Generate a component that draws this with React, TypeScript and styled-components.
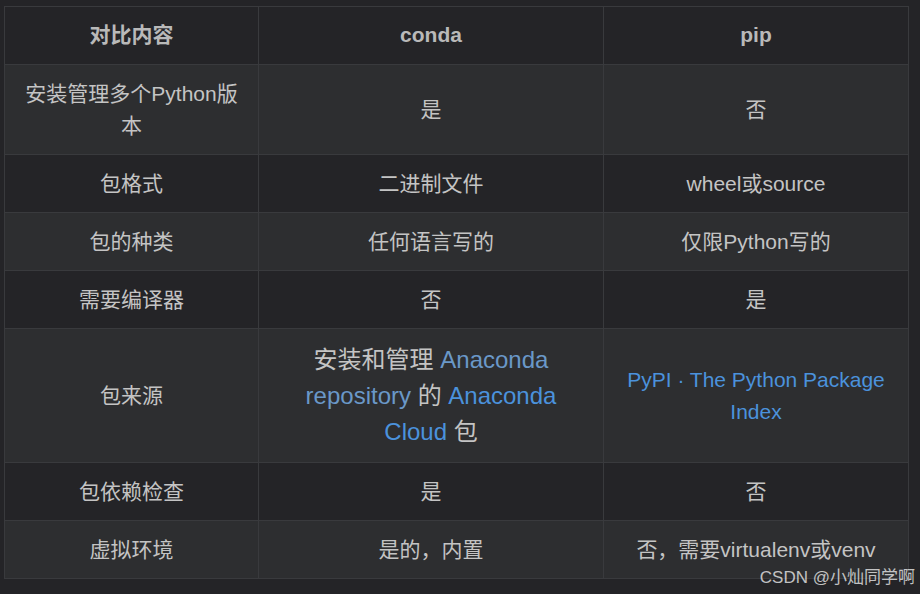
import React from 'react';
import styled, { createGlobalStyle } from 'styled-components';

const GlobalStyle = createGlobalStyle`
  html, body {
    margin: 0;
    padding: 0;
    background: #242427;
  }
`;

const Page = styled.div`
  position: relative;
  width: 920px;
  height: 594px;
  padding: 6px 0 0 4px;
  box-sizing: border-box;
  background: #242427;
  font-family: 'Liberation Sans', 'Noto Sans CJK SC', sans-serif;
`;

const Table = styled.table`
  width: 904px;
  border-collapse: collapse;
  table-layout: fixed;
  color: #c4c4c4;
  font-size: 21px;
  line-height: 32px;
`;

type RowProps = {
  striped?: boolean;
};

const Row = styled.tr<RowProps>`
  background: ${props => (props.striped ? '#2d2e30' : '#242427')};
`;

const HeadCell = styled.th`
  border: 1px solid #393a3d;
  padding: 12px 14px 13px;
  font-weight: bold;
  color: #b9b9b9;
  text-align: center;
`;

const Cell = styled.td`
  border: 1px solid #393a3d;
  padding: 12.5px 14px;
  text-align: center;
  vertical-align: middle;
`;

const BigText = styled.span`
  font-size: 24px;
  line-height: 36px;
`;

type LinkProps = {
  visited?: boolean;
};

const Link = styled.a<LinkProps>`
  color: ${props => (props.visited ? '#6a98c8' : '#4b92dc')};
  text-decoration: none;
`;

const Watermark = styled.div`
  position: absolute;
  right: 5px;
  bottom: 6px;
  font-size: 17px;
  line-height: 20px;
  color: rgba(255, 255, 255, 0.72);
  white-space: nowrap;
`;

const rows: [string, React.ReactNode, React.ReactNode][] = [
  ['安装管理多个Python版本', '是', '否'],
  ['包格式', '二进制文件', 'wheel或source'],
  ['包的种类', '任何语言写的', '仅限Python写的'],
  ['需要编译器', '否', '是'],
  [
    '包来源',
    <BigText>
      安装和管理 <Link visited>Anaconda repository</Link> 的 <Link>Anaconda Cloud</Link> 包
    </BigText>,
    <Link>PyPI · The Python Package Index</Link>,
  ],
  ['包依赖检查', '是', '否'],
  ['虚拟环境', '是的，内置', '否，需要virtualenv或venv'],
];

export default function App() {
  return (
    <Page>
      <GlobalStyle />
      <Table>
        <colgroup>
          <col style={{ width: 254 }} />
          <col style={{ width: 345 }} />
          <col style={{ width: 305 }} />
        </colgroup>
        <thead>
          <Row>
            <HeadCell>对比内容</HeadCell>
            <HeadCell>conda</HeadCell>
            <HeadCell>pip</HeadCell>
          </Row>
        </thead>
        <tbody>
          {rows.map((r, i) => (
            <Row key={i} striped={i % 2 === 0}>
              <Cell>{r[0]}</Cell>
              <Cell>{r[1]}</Cell>
              <Cell>{r[2]}</Cell>
            </Row>
          ))}
        </tbody>
      </Table>
      <Watermark>CSDN @小灿同学啊</Watermark>
    </Page>
  );
}
